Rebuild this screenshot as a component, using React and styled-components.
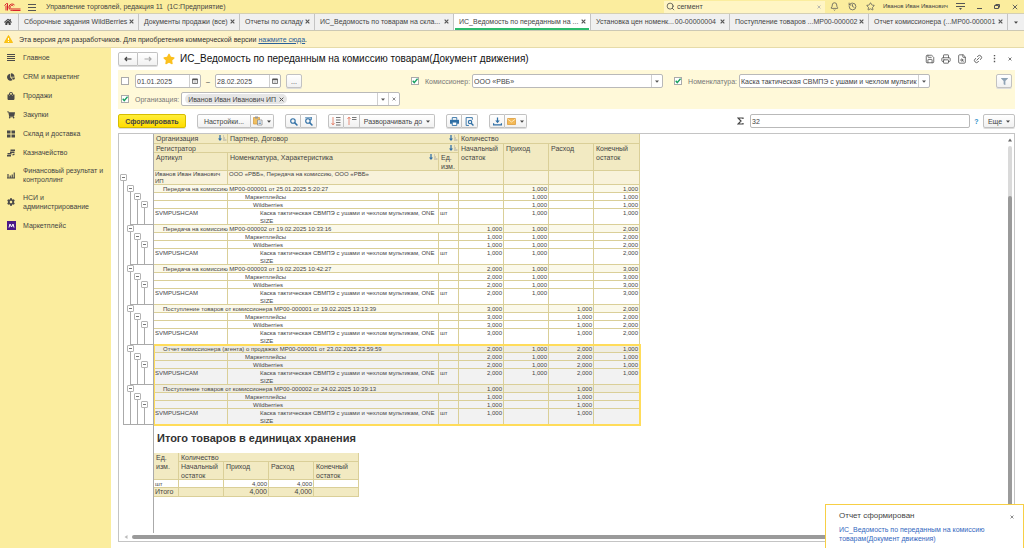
import React from "react";
import styled, { createGlobalStyle, css } from "styled-components";
import { FaHome, FaShoppingCart, FaCog, FaStar, FaFilter, FaChartPie, FaShoppingBag } from "react-icons/fa";
import { Bell, History, Star, Search, Save, Printer, Link2, FileSearch } from "lucide-react";

const color = {
  yellow: "#fbed9e",
  notice: "#fdf2c8",
  filter: "#fff9d9",
  ink: "#444",
  soft: "#777",
  line: "#c4c4c4",
  grid: "#dacf98",
  head: "#f2eac2",
  accent: "#ffdc5a",
  blue: "#2f6fa5",
  green: "#2dbb6c",
  tree: "#aaa",
};

const GlobalStyle = createGlobalStyle`
  * { box-sizing: border-box; }
  body {
    margin: 0;
    background: #fff;
    color: ${color.ink};
    font: 7px/9px "Liberation Sans", Arial, sans-serif;
  }
  button, input { font: inherit; color: inherit; margin: 0; }
  svg { display: block; flex: none; }
`;

const Shell = styled.div`
  display: flex;
  flex-direction: column;
  height: 100vh;
  overflow: hidden;
`;

/* ---------- window bar ---------- */
const WindowBar = styled.header`
  display: flex;
  align-items: center;
  height: 13px;
  flex: none;
  padding-left: 4px;
  background: ${color.yellow};
`;
const AppTitle = styled.span`
  margin-left: 3px;
  flex: 1;
  white-space: pre;
`;
const IconButton = styled.button`
  display: flex;
  align-items: center;
  justify-content: center;
  width: ${(p) => p.$w || 16}px;
  height: 12px;
  padding: 0;
  border: 0;
  background: none;
  color: ${(p) => p.$color || "#555"};
`;
const SearchBox = styled.label`
  display: flex;
  align-items: center;
  gap: 2px;
  width: 161px;
  height: 12px;
  padding: 0 0 0 2px;
  background: #fff5c4;
  margin-right: 1px;
`;
const SearchInput = styled.input`
  flex: 1;
  min-width: 0;
  padding: 0;
  border: 0;
  background: none;
  outline: 0;
`;
const UserName = styled.span`
  margin: 0 2px 0 3px;
  font-size: 6px;
  white-space: nowrap;
`;

/* ---------- tabs ---------- */
const TabBar = styled.nav`
  display: flex;
  height: 18px;
  flex: none;
  background: #f0f0f0;
  border-top: 1px solid #d4cfb4;
  border-bottom: 1px solid #ccc8b4;
`;
const Tab = styled.div`
  display: flex;
  align-items: stretch;
  flex: 0 1 ${(p) => p.$w}px;
  min-width: 0;
  padding: 0 1px 0 5px;
  border-right: 1px solid ${color.line};
  ${(p) => p.$active && css`
    padding: 0 1px;
    background: #fff;
    ${TabLabel} { padding-left: 4px; border-color: ${color.green}; }
    ${TabClose} { border-color: ${color.green}; }
  `}
`;
const TabLabel = styled.button`
  display: flex;
  justify-content: space-between;
  align-items: center;
  flex: 1;
  min-width: 0;
  padding: 0;
  border: 0;
  border-bottom: 2px solid transparent;
  background: none;
  white-space: nowrap;
`;
const TabClose = styled(IconButton)`
  height: auto;
  border-bottom: 2px solid transparent;
`;
const HomeTab = styled.button`
  display: flex;
  align-items: center;
  justify-content: center;
  width: 19px;
  padding: 0 3px 0 0;
  border: 0;
  border-right: 1px solid ${color.line};
  background: none;
`;
const MoreTabs = styled(HomeTab)`
  flex: 1;
  padding: 0;
  border: 0;
`;

/* ---------- notice ---------- */
const Notice = styled.div`
  display: flex;
  align-items: center;
  gap: 6px;
  height: 17px;
  flex: none;
  padding: 0 4px;
  background: ${color.notice};
  border-bottom: 1px solid #e6dba9;
  color: #333;
`;
const NoticeLink = styled.a`
  color: #2a6098;
`;

/* ---------- sidebar ---------- */
const Body = styled.div`
  display: flex;
  flex: 1;
  min-height: 0;
`;
const Sidebar = styled.nav`
  width: 111px;
  flex: none;
  background: ${color.yellow};
`;
const SideLink = styled.a`
  display: flex;
  align-items: center;
  gap: 7px;
  min-height: 19px;
  padding: ${(p) => (p.$tall ? "4px 4px 5px 6px" : "0 4px 0 6px")};
  color: ${color.ink};
  text-decoration: none;
`;
const SideIcon = styled.span`
  display: flex;
  flex: none;
  justify-content: center;
  width: 10px;
  color: #4a4a4a;
`;

/* ---------- main pane ---------- */
const Main = styled.main`
  display: flex;
  flex-direction: column;
  flex: 1;
  min-width: 0;
  padding: 0 9px 6px 7px;
`;
const TitleRow = styled.div`
  display: flex;
  align-items: center;
  height: 22px;
  margin-right: -3px;
`;
const NavPair = styled.div`
  display: flex;
  margin-right: 5px;
`;
const Button = styled.button`
  display: flex;
  align-items: center;
  justify-content: center;
  gap: 4px;
  height: 14px;
  width: ${(p) => (p.$w ? p.$w + "px" : "auto")};
  padding: 0;
  border: 1px solid #c2c2c2;
  border-radius: 2px;
  background: linear-gradient(#fff, #f1f1f1);
  box-shadow: 0 1px 0 #ddd;
  white-space: nowrap;
  color: ${(p) => p.$color || color.ink};
`;
const PrimaryButton = styled(Button)`
  width: 68px;
  border-color: #d6bd00;
  background: linear-gradient(#ffee38, #ffdc00);
  font-weight: bold;
`;
const ButtonGroup = styled.div`
  display: flex;
  ${Button}:not(:first-child) { border-left: 0; border-radius: 0; }
  ${Button}:first-child { border-radius: 2px 0 0 2px; }
  ${Button}:last-child { border-radius: 0 2px 2px 0; }
`;
const PageTitle = styled.h1`
  flex: 1;
  margin: 0 0 0 5px;
  font-size: 10px;
  line-height: 12px;
  font-weight: normal;
  color: #111;
  white-space: nowrap;
`;
const Filters = styled.form`
  display: grid;
  gap: 4px;
  padding: 4px 3px 3px;
  height: 39px;
  flex: none;
  background: ${color.filter};
`;
const FilterRow = styled.div`
  display: flex;
  align-items: center;
  height: 14px;
`;
const FilterCell = styled.div`
  display: flex;
  align-items: center;
  flex: ${(p) => p.$flex || "none"};
  margin-left: ${(p) => p.$ml || 0}px;
`;
const FieldLabel = styled.label`
  margin-right: 2px;
  color: ${color.soft};
  white-space: nowrap;
`;
const Check = styled.input.attrs({ type: "checkbox" })`
  appearance: none;
  width: 8px;
  height: 8px;
  margin: 0 6px 0 0;
  border: 1px solid #aaa;
  background: #fff;
  &:checked {
    background: #fff
      url("data:image/svg+xml,%3Csvg xmlns='http://www.w3.org/2000/svg' viewBox='0 0 8 8'%3E%3Cpath d='M1 3.6 3 6.2 7.4.8' fill='none' stroke='%2318a05e' stroke-width='1.9'/%3E%3C/svg%3E");
  }
`;
const Field = styled.div`
  display: flex;
  align-items: stretch;
  width: ${(p) => p.$w}px;
  height: 14px;
  border: 1px solid #b9b9b9;
  border-radius: 2px;
  background: #fff;
`;
const FieldInput = styled.input`
  flex: 1;
  min-width: 0;
  padding: 0 1px;
  border: 0;
  background: none;
  outline: 0;
`;
const FieldButton = styled.button`
  display: flex;
  align-items: center;
  justify-content: center;
  width: 11px;
  padding: 0;
  border: 0;
  border-left: 1px solid #cfcfcf;
  background: none;
  color: #555;
`;
const Dash = styled.span`
  width: 14px;
  text-align: center;
`;
const Chip = styled.span`
  display: flex;
  align-items: center;
  gap: 2px;
  margin: 1px auto 1px 3px;
  padding: 0 3px;
  border-radius: 5px;
  background: #e6e6e6;
`;
const ChipClose = styled(IconButton)`
  height: 8px;
`;
const Toolbar = styled.div`
  display: flex;
  align-items: center;
  height: 24px;
  flex: none;
`;
const ToolSet = styled.div`
  display: flex;
  gap: 11px;
  flex: 1;
`;
const SumField = styled(Field)`
  margin-left: 6px;
`;
const Help = styled.a`
  width: 13px;
  text-align: center;
  color: #3090c8;
  font-weight: bold;
  text-decoration: none;
`;

/* ---------- report ---------- */
const Report = styled.section`
  display: flex;
  flex-direction: column;
  flex: 1;
  min-height: 0;
  border: 1px solid ${color.line};
`;
const SheetRow = styled.div`
  display: flex;
  flex: 1;
  min-height: 0;
`;
const Gutter = styled.div`
  width: 35px;
  flex: none;
  padding-top: 40px;
  border-right: 1px solid ${color.tree};
`;
/* One vertical line per open level; the row's own level starts below its box. */
const stems = ({ $level, $leaf }) =>
  Array.from({ length: $level + 1 }, (_, i) => {
    const top = i === $level && !$leaf ? 5 : 0;
    return `linear-gradient(${color.tree}, ${color.tree}) ${4 + 7 * i}px ${top}px / 1px 100% no-repeat`;
  }).join(", ");
const GutterRow = styled.div`
  height: ${(p) => p.$h}px;
  padding-left: ${(p) => 1 + 7 * p.$level}px;
  background: ${stems};
`;
const GutterLeaf = styled(GutterRow)`
  background: linear-gradient(${color.tree}, ${color.tree}) ${(p) => 4 + 7 * p.$from}px 100% / 100% 1px no-repeat, ${stems};
`;
const Toggle = styled.button`
  display: flex;
  align-items: center;
  justify-content: center;
  width: 7px;
  height: 7px;
  padding: 0;
  border: 1px solid #b4b4b4;
  border-radius: 1px;
  background: #fff;
  &::before { content: ""; width: 3px; height: 1px; background: #777; }
`;
const Sheet = styled.div`
  flex: 1;
  min-width: 0;
  overflow: hidden;
`;
const Table = styled.table`
  width: ${(p) => p.$w}px;
  table-layout: fixed;
  border-spacing: 0;
`;
const Th = styled.th`
  height: ${(p) => p.$h}px;
  padding: 0 0 0 2px;
  font-weight: normal;
  text-align: left;
  vertical-align: top;
  background: ${color.head};
  box-shadow: inset -1px -1px 0 ${color.grid};
`;
const ThFlex = styled.span`
  display: flex;
  justify-content: space-between;
  padding-right: 1px;
`;
const Row = styled.tr`
  height: ${(p) => p.$h}px;
  background: ${(p) => p.$bg || "transparent"};
`;
const Td = styled.td`
  height: inherit;
  padding: 0 1px 0 ${(p) => p.$indent || 1}px;
  font-size: ${(p) => (p.$big ? 7 : 6)}px;
  line-height: ${(p) => p.$lh || 8}px;
  vertical-align: top;
  text-align: ${(p) => (p.$num ? "right" : "left")};
  white-space: ${(p) => (p.$wrap ? "normal" : "nowrap")};
  box-shadow: inset -1px -1px 0 ${color.grid};
  ${(p) => p.$num && css`padding-right: 2px;`}
`;
const Selected = styled.tbody`
  outline: 2px solid ${color.accent};
  outline-offset: -1px;
`;
const TotalsTitle = styled.h2`
  margin: 7px 0 8px 3px;
  font-size: 11px;
  line-height: 13px;
  color: #333;
`;
const VScroll = styled.div`
  display: flex;
  flex-direction: column;
  align-items: center;
  gap: 4px;
  width: 8px;
  padding-top: 4px;
`;
const VTrack = styled.div`
  display: flex;
  width: 4px;
  flex: 1;
  padding-top: 50px;
  border-radius: 2px;
  background: #dadada;
`;
const VThumb = styled.div`
  flex: 1;
  border-radius: 2px;
  background: #9a9a9a;
`;
const HScroll = styled.div`
  display: flex;
  align-items: center;
  gap: 4px;
  height: 8px;
  padding: 0 10px 0 5px;
`;
const HThumb = styled.div`
  height: 4px;
  flex: 1;
  border-radius: 2px;
  background: #9a9a9a;
`;

/* ---------- toast ---------- */
const Toast = styled.aside`
  position: fixed;
  right: 0;
  bottom: 0;
  width: 199px;
  height: 44px;
  padding: 6px 8px 0 13px;
  border: 1px solid #f7cf45;
  border-bottom: 0;
  background: #fff;
`;
const ToastHead = styled.div`
  display: flex;
  justify-content: space-between;
  font-size: 8px;
  line-height: 10px;
  margin-bottom: 2px;
`;
const ToastLink = styled.a`
  display: block;
  width: 152px;
  color: #3468c0;
  text-decoration: none;
`;

/* ---------- drawings ---------- */
const Svg = ({ w = 9, h = w, box = "0 0 16 16", children }) => (
  <svg width={w} height={h} viewBox={box} fill="none" stroke="currentColor" strokeWidth="1.6" aria-hidden="true">
    {children}
  </svg>
);
const Cross = ({ s = 5, t = 1.2 }) => (
  <Svg w={s} box="0 0 6 6"><path d="M.8.8l4.4 4.4M5.2.8L.8 5.2" strokeWidth={t} /></Svg>
);
const Caret = () => (
  <Svg w={4} h={3} box="0 0 4 3"><path d="M0 .5h4L2 2.8z" fill="currentColor" stroke="none" /></Svg>
);
const Logo = () => (
  <Svg w={17} h={10} box="0 0 34 20">
    <g stroke="#d8232a" strokeWidth="2">
      <path d="M1 7l4-4h2v14M4 7v10" />
      <path d="M21 6a6.500 6.500 0 1 0-4.500 11H33M18.500 8a3.600 3.600 0 1 0-2.500 6H33" />
    </g>
  </Svg>
);
const Burger = () => (
  <Svg w={8} box="0 0 8 8"><path d="M0 1.500h8M0 4.500h8M0 7.500h8" strokeWidth="1" /></Svg>
);
const Warning = () => (
  <Svg w={9} h={8} box="0 0 18 16">
    <path d="M9 1l8 14H1z" fill="#ffc61a" stroke="#f5b800" />
    <path d="M9 6v4M9 12v2" stroke="#fff" strokeWidth="2" />
  </Svg>
);
const Lines = () => (
  <Svg w={8} box="0 0 8 8"><path d="M0 .5h8M0 2.500h8M0 4.500h8M0 6.500h8" strokeWidth="1" /></Svg>
);
const Boxes = () => (
  <Svg w={8}><path d="M0 1h7v6H0zM9 1h7v6H9zM0 9h7v6H0zM9 9h7v6H9z" fill="currentColor" stroke="none" /></Svg>
);
const Coins = () => (
  <Svg w={8}>
    <path d="M7 1h9v3H7zM6 5h9v3H6zM1 8h8v3H1zM0 12h8v3H0z" fill="currentColor" stroke="none" />
    <path d="M11 10l4-1v3l-4 1z" fill="currentColor" stroke="none" />
  </Svg>
);
const Bars = () => (
  <Svg w={8}><path d="M2 6v8M6.500 9v5M10.500 7v7M14.500 3v11M0 14h16" strokeWidth="2.400" /></Svg>
);
const Market = () => (
  <Svg w={9} box="0 0 18 18">
    <path d="M0 0h18v18H0z" fill="#4b1a87" stroke="none" />
    <path d="M4 13l2-7 3 6 3-6 2 7" stroke="#fff" strokeWidth="2" />
  </Svg>
);
const Arrow = ({ flip }) => (
  <Svg w={8} h={6} box="0 0 16 12">
    <path d={flip ? "M1 6h13M10 2l4 4-4 4" : "M15 6H2M6 2L2 6l4 4"} strokeWidth="2.400" />
  </Svg>
);
const Calendar = () => (
  <Svg w={6} box="0 0 12 12">
    <path d="M1 2h10v9H1z" strokeWidth="1.500" />
    <path d="M1 3h10" strokeWidth="3" />
    <path d="M3 8h6" strokeWidth="1" />
  </Svg>
);
const Sort = () => (
  <Svg w={9} h={8} box="0 0 18 16">
    <path d="M4 2v9" stroke="#2f6fa5" strokeWidth="2.500" />
    <path d="M0 9h8l-4 5z" fill="#2f6fa5" stroke="none" />
    <path d="M10 4h2M10 8h4M10 12h7" stroke="#999" />
  </Svg>
);
const Paste = () => (
  <Svg w={10} box="0 0 20 20">
    <path d="M1 3h12v13H1z" fill="#efc063" stroke="#d9a043" />
    <path d="M4 1h6v4H4z" fill="#999" stroke="none" />
    <path d="M9 8h9v10H9z" fill="#fff" stroke="#8a8a8a" />
    <path d="M11 12h5M11 15h5" stroke="#5c8ab5" />
  </Svg>
);
const Magnifier = ({ arrow }) => (
  <Svg w={9}>
    <circle cx="7" cy="7" r="4" strokeWidth="2" />
    <path d="M10 10l5 5" strokeWidth="2.600" />
    {arrow && <path d="M2 1.500h11M13 0v5h-3" />}
  </Svg>
);
const Tree = ({ up }) => (
  <Svg w={10} box="0 0 20 20">
    <path d={up ? "M4 18V3M1 6l3-4 3 4" : "M4 2v15M1 14l3 4 3-4"} stroke="#e2735a" />
    <path d={up ? "M10 3h9M10 7h9" : "M10 3h9M10 8h9M10 13h9M10 18h9"} stroke="#777" strokeWidth="2" />
  </Svg>
);
const PrintBlue = () => (
  <Svg w={9}>
    <path d="M4 5V1h8v4" />
    <path d="M0 5h16v7H0z" fill="currentColor" stroke="none" />
    <path d="M4 9h8v6H4z" fill="#fff" />
  </Svg>
);
const Preview = () => (
  <Svg w={9}>
    <path d="M13 5V1H2v14h5" />
    <circle cx="9" cy="9" r="3" strokeWidth="2" />
    <path d="M11 11l4 4" strokeWidth="2.400" />
  </Svg>
);
const Download = () => (
  <Svg w={9}>
    <path d="M8 1v8M1 11v3h14v-3" strokeWidth="2.200" />
    <path d="M4 6h8l-4 5z" fill="currentColor" stroke="none" />
  </Svg>
);
const Mail = () => (
  <Svg w={9} h={7} box="0 0 18 14">
    <path d="M1 1h16v12H1z" fill="#f3b956" stroke="#dc9c3c" />
    <path d="M1 2l8 6 8-6" stroke="#fff0cf" />
  </Svg>
);
const Sigma = () => (
  <Svg w={7} h={8} box="0 0 14 16"><path d="M12 4V2H2l6 6-6 6h10v-2" strokeWidth="2.400" /></Svg>
);
const Dots = () => (
  <Svg w={3} h={8} box="0 0 3 8"><path d="M.8.500h1.400M.8 3.500h1.400M.8 6.500h1.400" strokeWidth="1.400" /></Svg>
);
const ScrollArrow = ({ left }) => (
  <Svg w={4} box="0 0 4 4">
    <path d={left ? "M3.500 0v4L.5 2z" : "M0 3.500h4L2 .5z"} fill={left ? "#bbb" : "#666"} stroke="none" />
  </Svg>
);

/* ---------- data ---------- */
const tabs = [
  { w: 120, label: "Сборочные задания WildBerries" },
  { w: 101, label: "Документы продажи (все)" },
  { w: 75, label: "Отчеты по складу" },
  { w: 139, label: "ИС_Ведомость по товарам на скла..." },
  { w: 137, label: "ИС_Ведомость по переданным на ...", active: true },
  { w: 139, label: "Установка цен номенк...", tail: "00-00000004" },
  { w: 139, label: "Поступление товаров ...", tail: "МР00-000002" },
  { w: 139, label: "Отчет комиссионера (...", tail: "МР00-000001" },
];

const sections = [
  { label: "Главное", icon: <Lines /> },
  { label: "CRM и маркетинг", icon: <FaChartPie size={8} /> },
  { label: "Продажи", icon: <FaShoppingBag size={8} /> },
  { label: "Закупки", icon: <FaShoppingCart size={8} /> },
  { label: "Склад и доставка", icon: <Boxes /> },
  { label: "Казначейство", icon: <Coins /> },
  { label: "Финансовый результат и контроллинг", icon: <Bars />, tall: true },
  { label: "НСИ и администрирование", icon: <FaCog size={8} />, tall: true },
  { label: "Маркетплейс", icon: <Market /> },
];

const documents = [
  { title: "Передача на комиссию МР00-000001 от 25.01.2025 5:20:27", values: ["", "1,000", "", "1,000"] },
  { title: "Передача на комиссию МР00-000002 от 19.02.2025 10:33:16", values: ["1,000", "1,000", "", "2,000"] },
  { title: "Передача на комиссию МР00-000003 от 19.02.2025 10:42:27", values: ["2,000", "1,000", "", "3,000"] },
  { title: "Поступление товаров от комиссионера МР00-000001 от 19.02.2025 13:13:39", values: ["3,000", "", "1,000", "2,000"] },
  { title: "Отчет комиссионера (агента) о продажах МР00-000001 от 23.02.2025 23:59:59", values: ["2,000", "1,000", "2,000", "1,000"] },
  { title: "Поступление товаров от комиссионера МР00-000002 от 24.02.2025 10:39:13", values: ["1,000", "", "1,000", ""] },
];

const Numbers = ({ values, big }) => values.map((v, i) => <Td key={i} $num $big={big}>{v}</Td>);

function DocumentRows({ doc, selected }) {
  const plain = selected ? "#f2f2f2" : "#fff";
  return (
    <>
      <Row $h={8} $bg={selected ? "#efede2" : "#fbf9ea"}>
        <Td colSpan={3} $indent={9}>{doc.title}</Td>
        <Numbers values={doc.values} />
      </Row>
      <Row $h={8} $bg={plain}>
        <Td /><Td $indent={17}>Маркетплейсы</Td><Td />
        <Numbers values={doc.values} />
      </Row>
      <Row $h={8} $bg={plain}>
        <Td /><Td $indent={25}>Wildberries</Td><Td />
        <Numbers values={doc.values} />
      </Row>
      <Row $h={16} $bg={plain}>
        <Td>SVMPUSHCAM</Td>
        <Td $indent={32} $wrap>Каска тактическая СВМПЭ с ушами и чехлом мультикам, ONE SIZE</Td>
        <Td>шт</Td>
        <Numbers values={doc.values} />
      </Row>
    </>
  );
}

const GutterNode = ({ level, h = 8 }) => (
  <GutterRow $level={level} $h={h}><Toggle type="button" aria-label="Свернуть группу" /></GutterRow>
);

function Outline() {
  return (
    <Gutter>
      <GutterNode level={0} h={11} />
      {documents.map((d, i) => (
        <React.Fragment key={d.title}>
          <GutterNode level={1} />
          <GutterNode level={2} />
          <GutterNode level={3} />
          <GutterLeaf $level={3} $leaf $h={16} $from={i === documents.length - 1 ? 0 : 1} />
        </React.Fragment>
      ))}
    </Gutter>
  );
}

function ReportTable() {
  return (
    <Table $w={486}>
      <colgroup>
        {[74, 211, 20, 45, 45, 45, 46].map((w, i) => <col key={i} style={{ width: w }} />)}
      </colgroup>
      <thead>
        <tr>
          <Th $h={10}><ThFlex>Организация<Sort /></ThFlex></Th>
          <Th colSpan={2}><ThFlex>Партнер, Договор<Sort /></ThFlex></Th>
          <Th colSpan={4}>Количество</Th>
        </tr>
        <tr>
          <Th $h={9} colSpan={3}><ThFlex>Регистратор<Sort /></ThFlex></Th>
          <Th rowSpan={2}>Начальный остаток</Th>
          <Th rowSpan={2}>Приход</Th>
          <Th rowSpan={2}>Расход</Th>
          <Th rowSpan={2}>Конечный остаток</Th>
        </tr>
        <tr>
          <Th $h={18}>Артикул</Th>
          <Th><ThFlex>Номенклатура, Характеристика<Sort /></ThFlex></Th>
          <Th>Ед. изм.</Th>
        </tr>
      </thead>
      <tbody>
        <Row $h={14} $bg="#f8f2da">
          <Td $wrap $lh={7}>Иванов Иван Иванович ИП</Td>
          <Td colSpan={2} $lh={7}>ООО «РВБ», Передача на комиссию, ООО «РВБ»</Td>
          <Numbers values={["", "", "", ""]} />
        </Row>
        {documents.slice(0, 4).map((d) => <DocumentRows key={d.title} doc={d} />)}
      </tbody>
      <Selected>
        {documents.slice(4).map((d) => <DocumentRows key={d.title} doc={d} selected />)}
      </Selected>
    </Table>
  );
}

function TotalsTable() {
  return (
    <Table $w={205}>
      <colgroup>
        {[25, 45, 45, 45, 45].map((w, i) => <col key={i} style={{ width: w }} />)}
      </colgroup>
      <thead>
        <tr>
          <Th $h={9} rowSpan={2}>Ед. изм.</Th>
          <Th colSpan={4}>Количество</Th>
        </tr>
        <tr>
          <Th $h={18}>Начальный остаток</Th>
          <Th>Приход</Th>
          <Th>Расход</Th>
          <Th>Конечный остаток</Th>
        </tr>
      </thead>
      <tbody>
        <Row $h={8}><Td>шт</Td><Numbers values={["", "4,000", "4,000", ""]} /></Row>
        <Row $h={9} $bg={color.head}><Td $big>Итого</Td><Numbers big values={["", "4,000", "4,000", ""]} /></Row>
      </tbody>
    </Table>
  );
}

export default function App() {
  return (
    <>
      <GlobalStyle />
      <Shell>
        <WindowBar>
          <Logo />
          <IconButton $w={22} aria-label="Меню"><Burger /></IconButton>
          <AppTitle>{"Управление торговлей, редакция 11  (1С:Предприятие)"}</AppTitle>
          <SearchBox>
            <Search size={9} />
            <SearchInput aria-label="Поиск" defaultValue="сегмент" />
            <IconButton $w={12} $color="#aaa" aria-label="Очистить"><Cross s={4} /></IconButton>
          </SearchBox>
          <IconButton $w={18} aria-label="Уведомления"><Bell size={9} /></IconButton>
          <IconButton $w={18} aria-label="История"><History size={9} /></IconButton>
          <IconButton $w={18} aria-label="Избранное"><Star size={9} /></IconButton>
          <UserName>Иванов Иван Иванович</UserName>
          <IconButton $w={20} aria-label="Настройки окна">
            <Svg w={9} box="0 0 9 9">
              <path d="M0 1.500h9M0 4.500h9" strokeWidth="1" />
              <path d="M3 6h3L4.500 8z" fill="currentColor" stroke="none" />
            </Svg>
          </IconButton>
          <IconButton $w={18} aria-label="Свернуть"><Svg w={5} box="0 0 5 5"><path d="M0 4.500h5" strokeWidth="1" /></Svg></IconButton>
          <IconButton $w={18} aria-label="Развернуть"><Svg w={6} h={5} box="0 0 6 5"><path d="M.5 1.500h4v3h-4zM1.500 .5h4v3" strokeWidth="1" /></Svg></IconButton>
          <IconButton $w={18} aria-label="Закрыть"><Cross s={6} t={0.9} /></IconButton>
        </WindowBar>

        <TabBar>
          <HomeTab aria-label="Начальная страница"><FaHome size={8} /></HomeTab>
          {tabs.map((t) => (
            <Tab key={t.label} $w={t.w} $active={t.active}>
              <TabLabel><span>{t.label}</span>{t.tail && <span>{t.tail}</span>}</TabLabel>
              <TabClose $w={12} aria-label="Закрыть вкладку"><Cross s={5} t={1.4} /></TabClose>
            </Tab>
          ))}
          <MoreTabs aria-label="Все вкладки"><Caret /></MoreTabs>
        </TabBar>

        <Notice>
          <Warning />
          <span>Эта версия для разработчиков. Для приобретения коммерческой версии <NoticeLink href="#buy">нажмите сюда</NoticeLink>.</span>
        </Notice>

        <Body>
          <Sidebar>
            {sections.map((s) => (
              <SideLink key={s.label} href="#section" $tall={s.tall}>
                <SideIcon>{s.icon}</SideIcon>
                {s.label}
              </SideLink>
            ))}
          </Sidebar>

          <Main>
            <TitleRow>
              <NavPair>
                <ButtonGroup>
                  <Button $w={20} aria-label="Назад"><Arrow /></Button>
                  <Button $w={20} $color="#aaa" aria-label="Вперед"><Arrow flip /></Button>
                </ButtonGroup>
              </NavPair>
              <FaStar size={12} color="#fbc01f" />
              <PageTitle>ИС_Ведомость по переданным на комиссию товарам(Документ движения)</PageTitle>
              <IconButton aria-label="Сохранить"><Save size={10} /></IconButton>
              <IconButton aria-label="Печать"><Printer size={10} /></IconButton>
              <IconButton aria-label="Просмотр"><FileSearch size={10} /></IconButton>
              <IconButton aria-label="Ссылка"><Link2 size={10} transform="rotate(-45)" /></IconButton>
              <IconButton aria-label="Еще"><Dots /></IconButton>
              <IconButton aria-label="Закрыть"><Cross s={4} /></IconButton>
            </TitleRow>

            <Filters>
              <FilterRow>
                <FilterCell $flex="1">
                  <Check aria-label="Период" />
                  <Field $w={66}>
                    <FieldInput aria-label="Начало периода" defaultValue="01.01.2025" />
                    <FieldButton type="button" aria-label="Выбрать дату"><Calendar /></FieldButton>
                  </Field>
                  <Dash>–</Dash>
                  <Field $w={66}>
                    <FieldInput aria-label="Конец периода" defaultValue="28.02.2025" />
                    <FieldButton type="button" aria-label="Выбрать дату"><Calendar /></FieldButton>
                  </Field>
                  <FilterCell $ml={5}><Button type="button" $w={16}>...</Button></FilterCell>
                </FilterCell>
                <FilterCell>
                  <Check defaultChecked aria-label="Учитывать комиссионера" />
                  <FieldLabel htmlFor="agent">Комиссионер:</FieldLabel>
                  <Field $w={191}>
                    <FieldInput id="agent" defaultValue="ООО «РВБ»" />
                    <FieldButton type="button" aria-label="Выбрать"><Caret /></FieldButton>
                  </Field>
                </FilterCell>
                <FilterCell $ml={11}>
                  <Check defaultChecked aria-label="Учитывать номенклатуру" />
                  <FieldLabel htmlFor="item">Номенклатура:</FieldLabel>
                  <Field $w={191}>
                    <FieldInput id="item" defaultValue="Каска тактическая СВМПЭ с ушами и чехлом мультик" />
                    <FieldButton type="button" aria-label="Выбрать"><Caret /></FieldButton>
                  </Field>
                </FilterCell>
                <FilterCell $ml={66}>
                  <Button type="button" $w={16} $color="#8fa3b5" aria-label="Отбор"><FaFilter size={7} /></Button>
                </FilterCell>
              </FilterRow>
              <FilterRow>
                <Check defaultChecked aria-label="Учитывать организацию" />
                <FieldLabel htmlFor="org">Организация:</FieldLabel>
                <Field $w={219}>
                  <Chip>Иванов Иван Иванович ИП<ChipClose $w={6} type="button" aria-label="Убрать"><Cross /></ChipClose></Chip>
                  <FieldButton id="org" type="button" aria-label="Выбрать"><Caret /></FieldButton>
                  <FieldButton type="button" aria-label="Очистить"><Cross s={4} t={1} /></FieldButton>
                </Field>
              </FilterRow>
            </Filters>

            <Toolbar>
              <ToolSet>
                <PrimaryButton>Сформировать</PrimaryButton>
                <ButtonGroup>
                  <Button $w={54}>Настройки...</Button>
                  <Button $w={23} aria-label="Варианты"><Paste /><Caret /></Button>
                </ButtonGroup>
                <ButtonGroup>
                  <Button $w={16} $color={color.blue} aria-label="Найти"><Magnifier /></Button>
                  <Button $w={16} $color={color.blue} aria-label="Найти далее"><Magnifier arrow /></Button>
                </ButtonGroup>
                <ButtonGroup>
                  <Button $w={16} aria-label="Развернуть"><Tree /></Button>
                  <Button $w={16} aria-label="Свернуть"><Tree up /></Button>
                  <Button $w={75}>Разворачивать до<Caret /></Button>
                </ButtonGroup>
                <ButtonGroup>
                  <Button $w={16} $color={color.blue} aria-label="Печать"><PrintBlue /></Button>
                  <Button $w={16} $color={color.blue} aria-label="Предпросмотр"><Preview /></Button>
                </ButtonGroup>
                <ButtonGroup>
                  <Button $w={16} $color={color.blue} aria-label="Сохранить"><Download /></Button>
                  <Button $w={22} aria-label="Отправить"><Mail /><Caret /></Button>
                </ButtonGroup>
              </ToolSet>
              <Sigma />
              <SumField $w={220}><FieldInput aria-label="Сумма" defaultValue="32" /></SumField>
              <Help href="#help">?</Help>
              <Button $w={32}>Еще<Caret /></Button>
            </Toolbar>

            <Report>
              <SheetRow>
                <Outline />
                <Sheet>
                  <ReportTable />
                  <TotalsTitle>Итого товаров в единицах хранения</TotalsTitle>
                  <TotalsTable />
                </Sheet>
                <VScroll><ScrollArrow /><VTrack><VThumb /></VTrack></VScroll>
              </SheetRow>
              <HScroll><ScrollArrow left /><HThumb /></HScroll>
            </Report>
          </Main>
        </Body>
      </Shell>

      <Toast>
        <ToastHead>Отчет сформирован<IconButton $w={6} aria-label="Закрыть"><Cross s={4} t={1} /></IconButton></ToastHead>
        <ToastLink href="#report">ИС_Ведомость по переданным на комиссию товарам(Документ движения)</ToastLink>
      </Toast>
    </>
  );
}
